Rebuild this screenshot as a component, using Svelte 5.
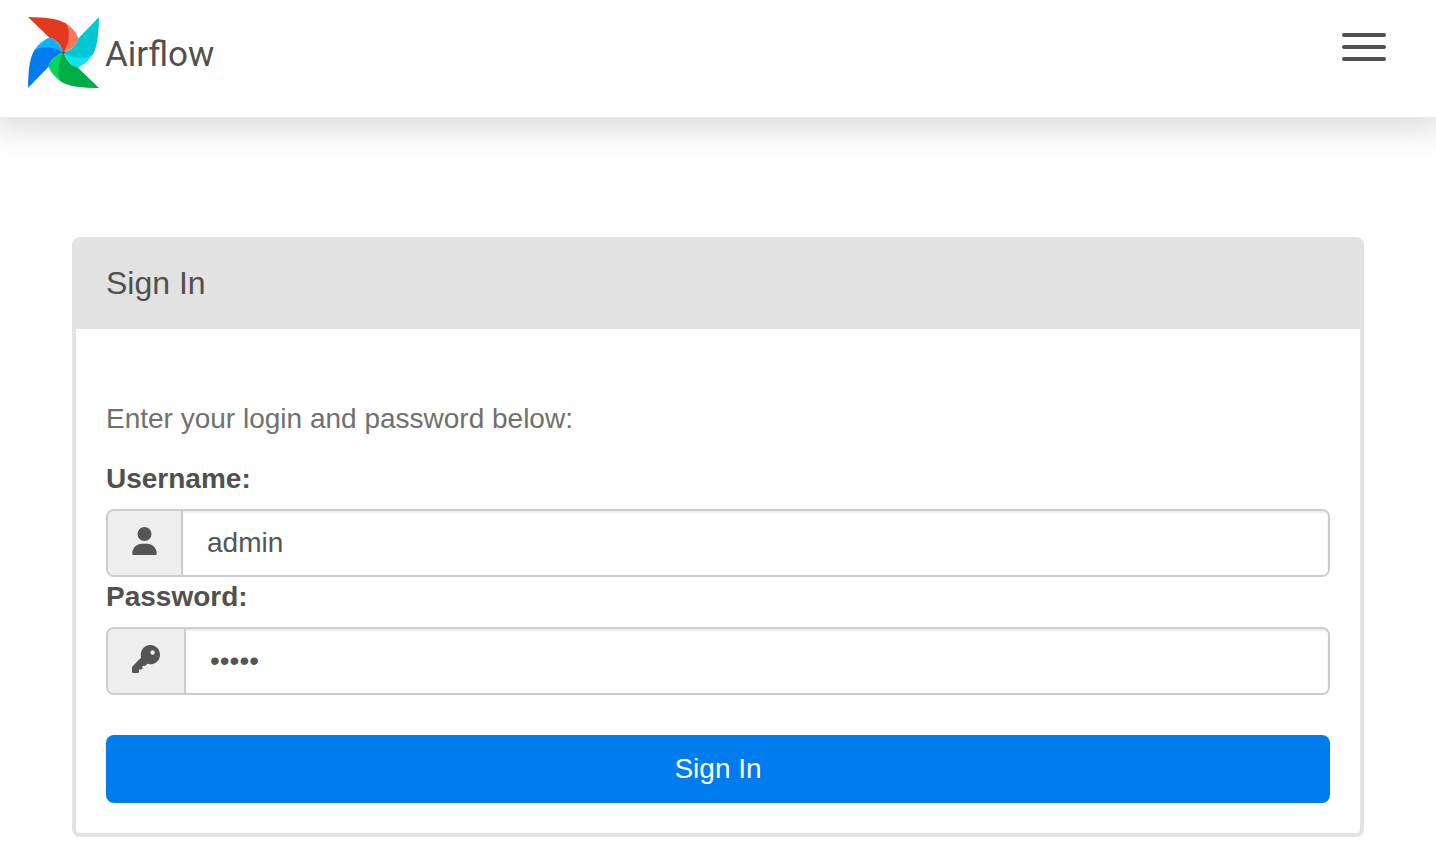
<script lang="ts">
  let username = $state('admin');
  let password = $state('admin');

  const blades = [
    { angle: 270, main: '#017cee', tip: '#0cb6ff' },
    { angle: 180, main: '#00ad46', tip: '#04d659' },
    { angle: 90, main: '#00c7d4', tip: '#11e1ee' },
    { angle: 0, main: '#e43921', tip: '#ff7557' }
  ];

  function onSubmit(event: SubmitEvent) {
    event.preventDefault();
  }
</script>

<header class="navbar">
  <a class="brand" href="/" aria-label="Airflow">
    <svg class="pinwheel" viewBox="26 28 212 212" aria-hidden="true">
      {#each blades as blade}
        <g transform={`rotate(${blade.angle} 132 134)`}>
          <path fill={blade.tip} d="M136 46C157 57 169 74 177 92C175 105 158 126 132 134L120 100Z" />
        </g>
      {/each}
      {#each blades as blade}
        <g transform={`rotate(${blade.angle} 132 134)`}>
          <path
            fill={blade.main}
            d="M26 28C76 29 114 32 139 47C152 66 152 104 132 134C124 108 104 91 90 90Z"
          />
        </g>
      {/each}
      <circle cx="132" cy="134" r="4" fill="#51504f" />
    </svg>
    <span class="brand-name">Airflow</span>
  </a>
  <button class="menu-toggle" type="button" aria-label="Toggle navigation">
    <span></span>
    <span></span>
    <span></span>
  </button>
</header>

<main class="container">
  <section class="panel">
    <h1 class="panel-heading">Sign In</h1>
    <form class="panel-body" onsubmit={onSubmit}>
      <p class="help">Enter your login and password below:</p>

      <label for="username">Username:</label>
      <div class="input-group">
        <span class="addon">
          <svg width="25" height="28" viewBox="0 0 448 512" aria-hidden="true">
            <path d="M224 256a128 128 0 1 0 0-256 128 128 0 1 0 0 256zm-45.700 48C79.800 304 0 383.800 0 482.300 0 498.700 13.300 512 29.700 512h388.600c16.400 0 29.700-13.300 29.700-29.700C448 383.800 368.200 304 269.700 304h-91.400z" />
          </svg>
        </span>
        <input id="username" name="username" type="text" bind:value={username} />
      </div>

      <label for="password">Password:</label>
      <div class="input-group">
        <span class="addon">
          <svg width="28" height="28" viewBox="0 0 512 512" aria-hidden="true">
            <path d="M336 352c97.200 0 176-78.800 176-176S433.200 0 336 0 160 78.800 160 176c0 18.700 2.900 36.800 8.300 53.700L7 391c-4.500 4.500-7 10.600-7 17v80c0 13.300 10.700 24 24 24h80c13.300 0 24-10.700 24-24v-40h40c13.300 0 24-10.700 24-24v-40h40c6.400 0 12.500-2.500 17-7l33.300-33.300c16.900 5.400 35 8.300 53.700 8.300zm40-256a40 40 0 1 1 0 80 40 40 0 1 1 0-80z" />
          </svg>
        </span>
        <input id="password" name="password" type="password" bind:value={password} />
      </div>

      <button class="submit" type="submit">Sign In</button>
    </form>
  </section>
</main>

<style>
  :global(body) {
    margin: 0;
    background: #fff;
    color: #51504f;
    font-family: "Liberation Sans", Arial, sans-serif;
    font-size: 28px;
    line-height: 40px;
  }

  .navbar {
    display: flex;
    align-items: flex-start;
    justify-content: space-between;
    padding: 17px 50px 29px 28px;
    background: #fff;
    box-shadow: 0 2px 36px 8px rgba(0, 0, 0, 0.16);
  }

  .brand {
    display: flex;
    align-items: center;
    gap: 6px;
    color: #51504f;
    text-decoration: none;
  }

  .pinwheel {
    display: block;
    width: 71px;
    height: 71px;
  }

  .brand-name {
    padding-top: 4px;
    font-family: Roboto, sans-serif;
    font-size: 35px;
  }

  .menu-toggle {
    display: flex;
    flex-direction: column;
    gap: 8px;
    margin-top: 16px;
    padding: 0;
    border: 0;
    background: transparent;
    cursor: pointer;
  }

  .menu-toggle span {
    width: 44px;
    height: 4px;
    border-radius: 2px;
    background: #51504f;
  }

  .container {
    padding: 120px 72px 26px;
  }

  .panel {
    border: 4px solid #e2e2e2;
    border-radius: 8px;
  }

  .panel-heading {
    margin: 0;
    padding: 22px 30px 26px;
    background: #e2e2e2;
    font-size: 32px;
    font-weight: 400;
    line-height: 40px;
  }

  .panel-body {
    padding: 70px 30px 30px;
  }

  .help {
    margin: 0 0 20px;
    color: #707070;
  }

  label {
    display: block;
    margin-bottom: 10px;
    font-weight: 700;
  }

  .input-group {
    display: flex;
    box-sizing: border-box;
    height: 68px;
    overflow: hidden;
    border: 2px solid #ccc;
    border-radius: 8px;
  }

  .addon {
    display: flex;
    align-items: center;
    padding: 0 24px 4px;
    border-right: 2px solid #ccc;
    background: #eee;
  }

  .addon svg {
    fill: #555;
  }

  input {
    flex: 1;
    min-width: 0;
    padding: 0 24px;
    border: 0;
    outline: 0;
    background: #fff;
    box-shadow: inset 0 2px 2px rgba(0, 0, 0, 0.08);
    color: #555;
    font: inherit;
  }

  .submit {
    display: block;
    width: 100%;
    margin-top: 40px;
    padding: 14px 24px;
    border: 0;
    border-radius: 8px;
    background: #017cee;
    color: #fff;
    font: inherit;
    cursor: pointer;
  }
</style>
